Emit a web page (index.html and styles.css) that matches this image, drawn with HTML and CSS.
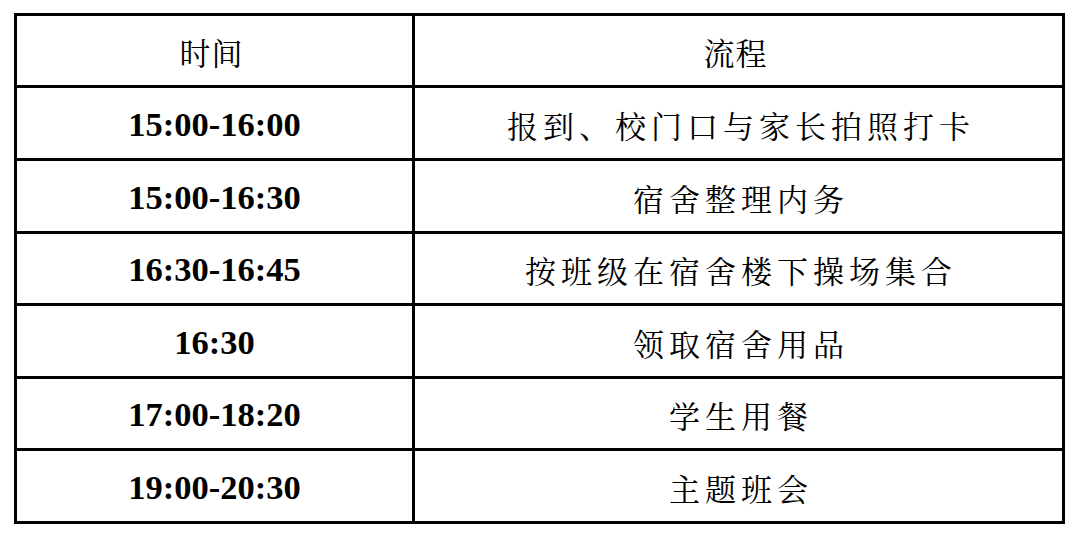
FILE: index.html
```html
<!DOCTYPE html>
<html lang="zh-CN">
<head>
<meta charset="utf-8">
<link rel="stylesheet" href="styles.css">
</head>
<body>
<div class="schedule">
  <div class="cell head">时间</div>
  <div class="cell head">流程</div>
  <div class="cell time">15:00-16:00</div>
  <div class="cell step">报到、校门口与家长拍照打卡</div>
  <div class="cell time">15:00-16:30</div>
  <div class="cell step">宿舍整理内务</div>
  <div class="cell time">16:30-16:45</div>
  <div class="cell step">按班级在宿舍楼下操场集合</div>
  <div class="cell time">16:30</div>
  <div class="cell step">领取宿舍用品</div>
  <div class="cell time">17:00-18:20</div>
  <div class="cell step">学生用餐</div>
  <div class="cell time">19:00-20:30</div>
  <div class="cell step">主题班会</div>
</div>
</body>
</html>
```

FILE: styles.css
```css
html, body {
  margin: 0;
  padding: 0;
  background: #fff;
}

body {
  padding: 13px 0 0 14px;
}

.schedule {
  display: grid;
  grid-template-columns: 398px 650px;
  grid-template-rows: 72px 73px 73px 72px 73px 72px 73px;
  width: 1048px;
  border-top: 3px solid #000;
  border-left: 3px solid #000;
  color: #000;
}

.cell {
  box-sizing: border-box;
  border-right: 3px solid #000;
  border-bottom: 3px solid #000;
  display: flex;
  align-items: center;
  justify-content: center;
  white-space: nowrap;
}

.head {
  font-family: "Noto Serif CJK SC", "Noto Sans CJK SC", serif;
  font-size: 31px;
  letter-spacing: 1px;
  padding-right: 6px;
  padding-top: 2px;
}

.time {
  font-family: "Liberation Serif", "Times New Roman", serif;
  font-weight: bold;
  font-size: 34.5px;
  padding-top: 2px;
}

.step {
  font-family: "Noto Serif CJK SC", "Noto Sans CJK SC", serif;
  font-size: 31px;
  letter-spacing: 5px;
  padding-left: 5px;
  padding-top: 2px;
}
```
